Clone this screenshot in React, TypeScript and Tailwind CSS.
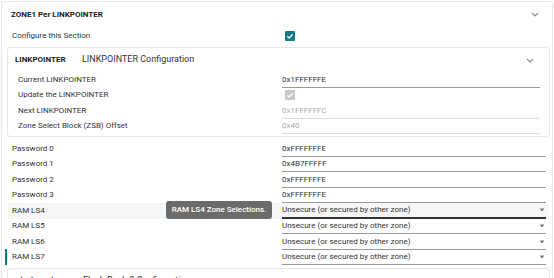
import React from "react";

const font = { fontFamily: "Roboto, 'Liberation Sans', sans-serif" };

function Chevron({ className = "" }: { className?: string }) {
  return (
    <svg width="8" height="5" viewBox="0 0 8 5" className={className}>
      <path d="M1 1l3 3 3-3" fill="none" stroke="#8a8a8a" strokeWidth="1.1" />
    </svg>
  );
}

function Caret() {
  return (
    <svg width="6" height="4" viewBox="0 0 6 4">
      <path d="M0.5 0.5h5L3 3.5z" fill="#777" />
    </svg>
  );
}

function Check({ disabled = false }: { disabled?: boolean }) {
  return (
    <div
      className={
        "ml-[3px] w-[10px] h-[10px] rounded-[1px] flex items-center justify-center " +
        (disabled ? "bg-[#c9c9c9]" : "bg-[#137a84]")
      }
    >
      <svg width="8" height="8" viewBox="0 0 8 8">
        <path d="M1.3 4.2l1.8 1.8 3.6-3.8" fill="none" stroke="white" strokeWidth="1.3" />
      </svg>
    </div>
  );
}

function TextValue({ value, disabled = false }: { value: string; disabled?: boolean }) {
  return (
    <div
      className={
        "h-full flex items-end pb-[2px] border-b " +
        (disabled ? "text-[#a9a9a9] border-[#dcdcdc]" : "text-[#333] border-[#9a9a9a]")
      }
    >
      <span className="leading-[10px]">{value}</span>
    </div>
  );
}

function SelectValue({ focused = false }: { focused?: boolean }) {
  return (
    <div
      className={
        "h-full flex items-end justify-between pb-[2px] text-[#333] " +
        (focused ? "border-b-2 border-[#333]" : "border-b border-[#9a9a9a]")
      }
    >
      <span className="leading-[10px]">Unsecure (or secured by other zone)</span>
      <span className="mr-[1px] mb-[3px]">
        <Caret />
      </span>
    </div>
  );
}

const passwords = [
  ["Password 0", "0xFFFFFFFE"],
  ["Password 1", "0x4B7FFFFF"],
  ["Password 2", "0xFFFFFFFE"],
  ["Password 3", "0xFFFFFFFE"],
];

export default function App() {
  return (
    <div className="w-[554px] h-[278px] overflow-hidden bg-white text-[8px] text-[#333]" style={font}>
      <div className="ml-[1px] mt-[1px] w-[552px] border border-[#e6e6e6] rounded-[3px]">
        {/* Zone header */}
        <div className="h-[25px] flex items-center justify-between pl-[9px] pr-[13px]">
          <span className="font-bold text-[#222]">ZONE1 Per LINKPOINTER</span>
          <Chevron />
        </div>

        <div className="h-[17px] grid grid-cols-[270px_1fr] items-center ml-[6px] pl-[4px]">
          <span>Configure this Section</span>
          <Check />
        </div>

        {/* LINKPOINTER card */}
        <div className="mt-[3px] ml-[5px] mr-[2px] border border-[#e6e6e6] rounded-[3px] pb-[2px]">
          <div className="h-[24px] flex items-center justify-between pl-[7px] pr-[15px]">
            <div className="flex items-center">
              <span className="font-bold text-[#222] w-[67px]">LINKPOINTER</span>
              <span className="text-[9px] text-[#333]">LINKPOINTER Configuration</span>
            </div>
            <Chevron />
          </div>
          <div className="pl-[10px] pr-[9px]">
            <div className="h-[15.5px] grid grid-cols-[264px_1fr] items-center">
              <span>Current LINKPOINTER</span>
              <TextValue value="0x1FFFFFFE" />
            </div>
            <div className="h-[15.5px] grid grid-cols-[264px_1fr] items-center">
              <span>Update the LINKPOINTER</span>
              <Check disabled />
            </div>
            <div className="h-[15.5px] grid grid-cols-[264px_1fr] items-center">
              <span>Next LINKPOINTER</span>
              <TextValue value="0x1FFFFFFC" disabled />
            </div>
            <div className="h-[15.5px] grid grid-cols-[264px_1fr] items-center">
              <span>Zone Select Block (ZSB) Offset</span>
              <TextValue value="0x40" disabled />
            </div>
          </div>
        </div>

        {/* Passwords and RAM */}
        <div className="mt-[4px] ml-[6px] mr-[3px]">
          {passwords.map(([label, value]) => (
            <div key={label} className="h-[15.5px] grid grid-cols-[270px_1fr] items-center pl-[4px] pr-[3px]">
              <span>{label}</span>
              <TextValue value={value} />
            </div>
          ))}
          {["RAM LS4", "RAM LS5", "RAM LS6", "RAM LS7"].map((label, i) => (
            <div
              key={label}
              className={
                "relative h-[15.5px] grid grid-cols-[270px_1fr] items-center pl-[4px] pr-[3px] " +
                (i === 0 ? "bg-[#f6f6f6]" : "")
              }
            >
              <span>{label}</span>
              <SelectValue focused={i === 0} />
              {i === 0 && (
                <div className="absolute left-[158px] top-[-2px] w-[106px] h-[18px] rounded-[3px] bg-[#6b6b6b] text-white font-medium flex items-center justify-center">
                  RAM LS4 Zone Selections.
                </div>
              )}
              {i === 3 && <div className="absolute left-[-3px] top-[-1px] w-[2px] h-[16px] bg-[#0f7580]" />}
            </div>
          ))}
        </div>

        {/* Flash Bank card */}
        <div className="mt-[3px] ml-[5px] mr-[2px] border border-[#e6e6e6] rounded-[3px]">
          <div className="h-[24px] flex items-center justify-between pl-[8px] pr-[15px]">
            <div className="flex items-center">
              <span className="font-bold text-[#222] w-[67px]">Flash Bank 0</span>
              <span className="text-[9px] text-[#333]">Flash Bank 0 Configuration</span>
            </div>
            <Chevron />
          </div>
        </div>
      </div>
    </div>
  );
}
